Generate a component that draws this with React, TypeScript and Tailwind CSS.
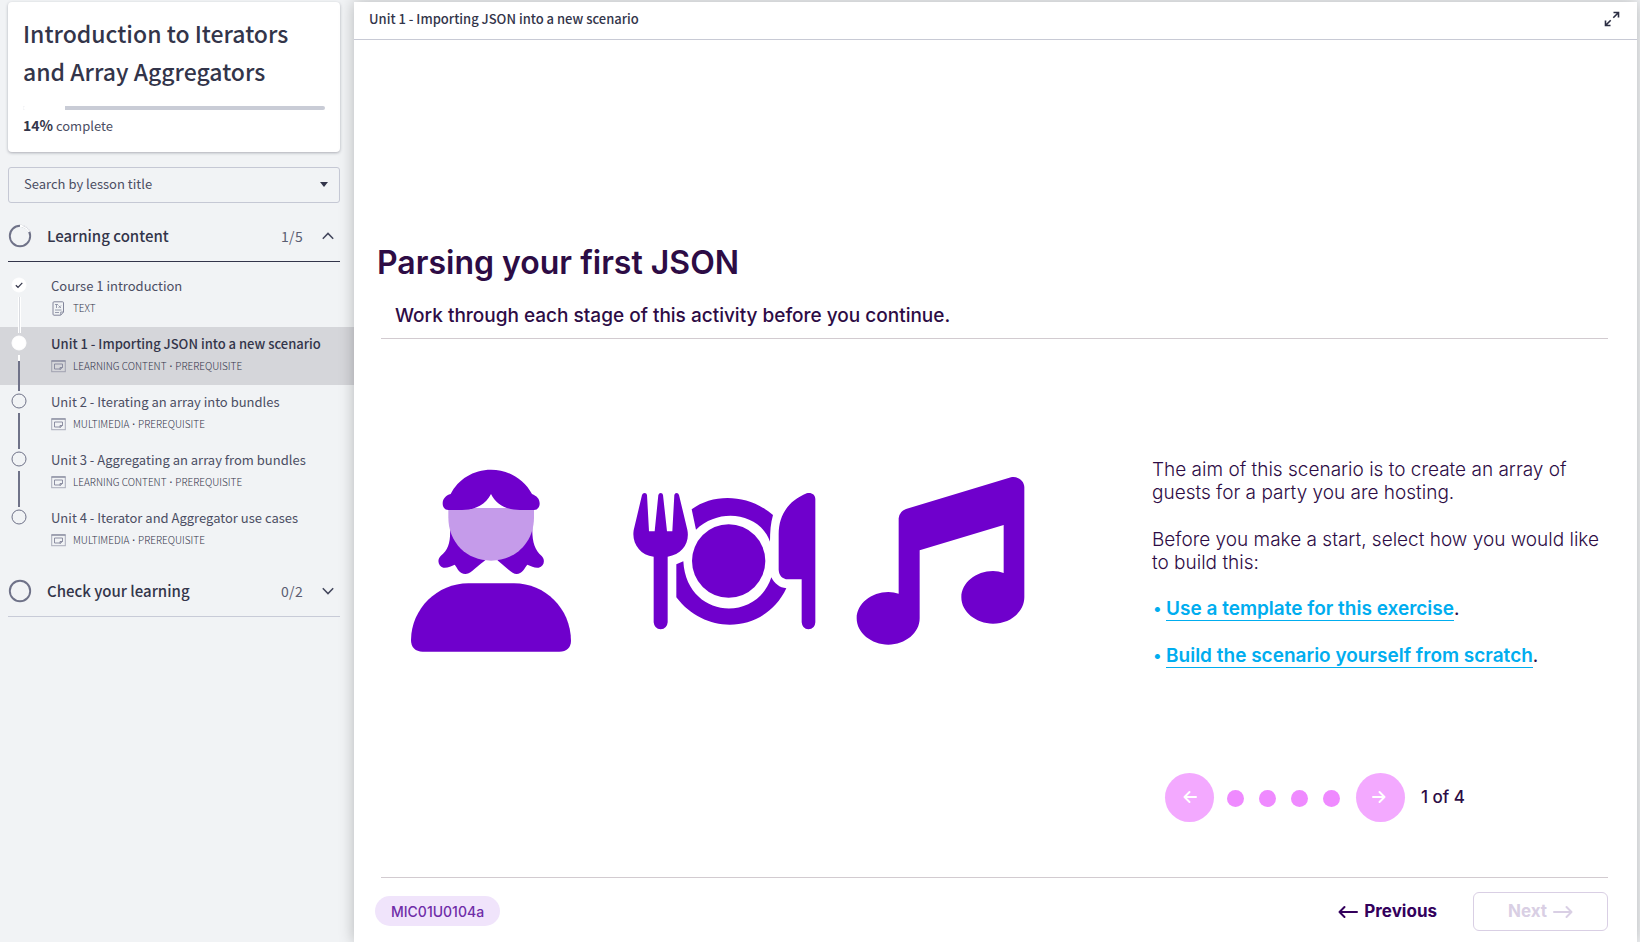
type LessonState = "done" | "active" | "todo";

interface Lesson {
  title: string;
  kind: string[];
  icon: "text" | "media";
  state: LessonState;
}

const lessons: Lesson[] = [
  { title: "Course 1 introduction", kind: ["TEXT"], icon: "text", state: "done" },
  { title: "Unit 1 - Importing JSON into a new scenario", kind: ["LEARNING CONTENT", "PREREQUISITE"], icon: "media", state: "active" },
  { title: "Unit 2 - Iterating an array into bundles", kind: ["MULTIMEDIA", "PREREQUISITE"], icon: "media", state: "todo" },
  { title: "Unit 3 - Aggregating an array from bundles", kind: ["LEARNING CONTENT", "PREREQUISITE"], icon: "media", state: "todo" },
  { title: "Unit 4 - Iterator and Aggregator use cases", kind: ["MULTIMEDIA", "PREREQUISITE"], icon: "media", state: "todo" },
];

function TextIcon() {
  return (
    <svg width="15" height="15" viewBox="0 0 15 15" fill="none" stroke="#82859a" aria-hidden="true">
      <path d="M3 .8h8.5a1 1 0 0 1 1 1V11L9.700 14.200H3a1 1 0 0 1-1-1V1.800a1 1 0 0 1 1-1Z" />
      <path d="M12.500 11H9.700v3M4 3.500h3M5.500 3.500v3.500M7.500 4.500l2.500 2.500M10 4.500 7.500 7M4 9h6.500M4 11.500h4" strokeWidth=".8" />
    </svg>
  );
}

function MediaIcon() {
  return (
    <svg width="15" height="13" viewBox="0 0 15 13" fill="none" stroke="#82859a" aria-hidden="true">
      <rect x=".7" y=".9" width="13.600" height="10.800" strokeOpacity=".65" />
      <path d="M.5 1h14" strokeWidth="1.200" />
      <path d="M9.500 9H3.500V4h8v3.500M9 9.500V7.500h2.500Z" strokeWidth=".9" />
    </svg>
  );
}

function LessonMarker({ state, last }: { state: LessonState; last: boolean }) {
  return (
    <div className="flex w-4 flex-none flex-col items-center gap-1 pt-2">
      <svg className="flex-none" width="16" height="16" viewBox="0 0 16 16" aria-hidden="true">
        <circle
          cx="8"
          cy="8"
          r="7"
          fill={state === "todo" ? "none" : "#fff"}
          stroke={state === "todo" ? "#6f7288" : "#fff"}
        />
        {state === "done" && <path d="M4.800 8.300 7 10.300l4.300-4.500" fill="none" stroke="#33354a" strokeWidth="1.200" />}
      </svg>
      {!last && state === "done" && <span className="h-9 w-[3px] flex-none border-x border-white bg-[#d9dbe0]" />}
      {!last && state === "active" && (
        <span className="flex h-9 w-[2px] flex-none flex-col bg-[#6f7288]">
          <span className="h-[6px] bg-white" />
        </span>
      )}
      {!last && state === "todo" && <span className="h-9 w-[2px] flex-none bg-[#6f7288]" />}
    </div>
  );
}

function Chevron({ up }: { up: boolean }) {
  return (
    <svg width="12" height="8" viewBox="0 0 12 8" fill="none" stroke="#43465c" strokeWidth="1.500" aria-hidden="true">
      <path d={up ? "M.8 6.800 6 1.400l5.200 5.400" : "M.8 1.200 6 6.600l5.200-5.400"} />
    </svg>
  );
}

function SectionHeader({ title, count, open }: { title: string; count: string; open: boolean }) {
  return (
    <button
      type="button"
      aria-expanded={open}
      className={
        "mx-2 flex h-[51px] items-center border-b text-left text-[#33354a] " +
        (open ? "border-[#33354a]" : "border-[#c8cbd7]")
      }
    >
      <svg width="24" height="24" viewBox="0 0 24 24" fill="none" strokeWidth="1.900" aria-hidden="true">
        <circle cx="12" cy="12" r="10.200" stroke="#6f7288" />
        {open && <path d="M12 1.800A10.200 10.200 0 0 1 21.200 7.600" stroke="#f1f3f5" strokeWidth="2.800" />}
        {open && <path d="M12 1.800A10.200 10.200 0 0 1 21.200 7.600" stroke="#fff" />}
        {open && <path d="M14.500 1.500A10.800 10.800 0 0 1 21.800 7.500" stroke="#c3c6d0" strokeWidth=".6" />}
      </svg>
      <span className="ml-[15px] flex-1 text-[15px] font-medium">{title}</span>
      <span className="mr-[19px] text-[14px] tracking-wide text-[#5a5d72]">{count}</span>
      <span className="mr-[6px]">
        <Chevron up={open} />
      </span>
    </button>
  );
}

function Sidebar() {
  return (
    <aside className="flex w-[354px] flex-none flex-col pt-[2px] font-['Noto_Sans_CJK_SC','Open_Sans',sans-serif]">
      <div className="mr-[14px] ml-2 rounded bg-white px-[15px] pt-3 pb-4 shadow-[0_1px_3px_rgba(40,44,60,0.35)]">
        <h1 className="text-[23px] leading-[38px] font-medium text-[#33354a]">
          Introduction to Iterators
          <br />
          and Array Aggregators
        </h1>
        <div
          role="progressbar"
          aria-label="Course progress"
          aria-valuenow={14}
          aria-valuemin={0}
          aria-valuemax={100}
          className="mt-4 flex h-1 overflow-hidden rounded-full bg-[#c9ccd6]"
        >
          <div className="w-[14%] bg-white" />
        </div>
        <p className="mt-[5px] text-[13px] leading-5 text-[#4b4e63]">
          <span className="text-[14px] font-bold text-[#33354a]">14%</span> complete
        </p>
      </div>

      <div className="relative mt-[15px] mr-[14px] ml-2">
        <select
          aria-label="Search by lesson title"
          className="h-9 w-full appearance-none rounded-[3px] border border-[#c5c8d4] bg-transparent px-[15px] pb-[2px] text-[13px] text-[#4b4e63]"
        >
          <option>Search by lesson title</option>
        </select>
        <svg className="pointer-events-none absolute top-[15px] right-3" width="8" height="5" viewBox="0 0 8 5" aria-hidden="true">
          <path d="M0 0h8L4 5Z" fill="#33354a" />
        </svg>
      </div>

      <div className="mt-2 mr-[6px] flex flex-col">
        <SectionHeader title="Learning content" count="1/5" open />
      </div>
      <ol className="py-[7px]">
        {lessons.map((lesson, i) => (
          <li key={lesson.title} className={lesson.state === "active" ? "h-[58px] bg-[#d5d6da]" : "h-[58px]"}>
            <a href="#lesson" className="flex h-full gap-6 pl-[11px]">
              <LessonMarker state={lesson.state} last={i === lessons.length - 1} />
              <span className="flex flex-col pt-[7px]">
                <span
                  className={
                    "text-[13px] leading-5 " +
                    (lesson.state === "active" ? "font-medium text-[#33354a]" : "text-[#4b4e63]")
                  }
                >
                  {lesson.title}
                </span>
                <span className="mt-1 flex items-center text-[10px] leading-4 font-light text-[#33354a]">
                  <span className="mr-[7px]">{lesson.icon === "text" ? <TextIcon /> : <MediaIcon />}</span>
                  {lesson.kind[0]}
                  {lesson.kind[1] && <span className="mx-[3px] font-['Open_Sans',sans-serif] font-semibold">·</span>}
                  {lesson.kind[1]}
                </span>
              </span>
            </a>
          </li>
        ))}
      </ol>
      <div className="mr-[6px] flex flex-col">
        <SectionHeader title="Check your learning" count="0/2" open={false} />
      </div>
    </aside>
  );
}

function PersonArt() {
  return (
    <svg width="162" height="184" viewBox="60 55 486 552" fill="#6f00cc" aria-hidden="true">
      <path d="M180 230C182 275 176 296 152 316 140 328 145 347 160 351 172 353 184 346 194 342 202 352 208 370 226 370 240 370 250 356 284 330H324C356 356 366 370 380 370 396 370 404 352 412 342 424 346 434 353 446 351 462 347 467 328 455 316 434 296 426 275 427 230Z" />
      <path d="M284 329 303 326 324 329 303 372Z" fill="#fff" />
      <path d="M175 172H432V200C432 276 376 330 303 330S175 276 175 200Z" fill="#c59bea" />
      <path d="M182 130C204 86 250 57 303 57S402 86 426 130C440 136 449 144 449 158 449 170 443 178 432 178H390C348 178 318 160 303 130 288 160 258 178 216 178H175C164 178 158 170 158 158 158 144 168 134 182 130Z" />
      <path d="M235 398H372C466 398 542 474 543 570 543 590 530 603 508 603H98C76 603 63 590 63 568 64 474 142 398 235 398Z" />
    </svg>
  );
}

function DinnerArt() {
  return (
    <svg width="184" height="139" viewBox="730 125 552 417" fill="#6f00cc" aria-hidden="true">
      <path d="M757 134Q759 128 765 128 771 128 772 134L778 243H795L806 134Q808 128 813 128 819 128 820 134L832 243H848L854 134Q855 128 861 128 866 128 868 134L893 238C901 278 878 312 834 319V516Q832 536 813 537 794 536 792 516V319C750 314 726 278 732 240Z" />
      <path d="M906 177C974 127 1078 132 1150 194 1143 218 1141 244 1141 274 1112 190 992 168 919 238Z" />
      <circle cx="1017" cy="332" r="110" />
      <path d="M860 342 881 333C890 504 1100 520 1145 381 1154 400 1170 412 1190 414 1128 546 952 562 860 441Z" />
      <path d="M1251 129C1264 125 1277 132 1277 146V516Q1276 536 1256 537 1238 536 1236 516V387H1195C1178 386 1168 376 1167 358V252C1167 190 1200 150 1251 129Z" />
    </svg>
  );
}

function MusicArt() {
  return (
    <svg width="170" height="170" viewBox="406 78 510 510" fill="#6f00cc" aria-hidden="true">
      <path d="M871 82C892 78 911 92 911 112V442C911 486 868 521 817 521S722 486 722 442 766 363 817 363Q834 363 849 369V225L597 301V505C597 549 554 584 503 584S408 549 408 505 452 426 503 426Q520 426 534 431V205Q536 184 556 177Z" />
    </svg>
  );
}

function Arrow({ left, width = 20 }: { left?: boolean; width?: number }) {
  return (
    <svg width={width} height="14" viewBox={"0 0 " + width + " 14"} fill="none" stroke="currentColor" strokeWidth="2" strokeLinecap="round" strokeLinejoin="round" aria-hidden="true">
      {left ? (
        <path d={"M" + (width - 1) + " 7H1.500M6.500 2 1.500 7l5 5"} />
      ) : (
        <path d={"M1 7H" + (width - 1.5) + "M" + (width - 6.5) + " 2l5 5-5 5"} />
      )}
    </svg>
  );
}

function Pager() {
  return (
    <nav aria-label="Steps" className="ml-[13px] flex items-center text-white">
      <button type="button" aria-label="Previous step" className="flex size-[49px] items-center justify-center rounded-full bg-[#f3a9ff] pb-[2px]">
        <Arrow left width={14} />
      </button>
      <ul className="mr-4 ml-[13px] flex gap-[15px] pt-[2px]">
        {[1, 2, 3, 4].map((n) => (
          <li key={n} className="size-[17px] rounded-full bg-[#ef8aff]" />
        ))}
      </ul>
      <button type="button" aria-label="Next step" className="flex size-[49px] items-center justify-center rounded-full bg-[#f3a9ff] pr-1 pb-[2px]">
        <Arrow width={14} />
      </button>
      <span className="ml-4 text-[17px] font-medium text-[#2d0c45]">1 of 4</span>
    </nav>
  );
}

function ChoiceLink({ href, label }: { href: string; label: string }) {
  return (
    <li className="flex">
      <span className="w-[14px] text-[#00adef]">•</span>
      <a href={href} className="border-b border-[#00adef] font-semibold text-[#00adef]">
        {label}
      </a>
      <span className="font-normal">.</span>
    </li>
  );
}

export default function App() {
  return (
    <div className="flex min-h-screen overflow-hidden bg-[#f1f3f5]">
      <Sidebar />
      <main className="mt-[2px] mr-[3px] flex flex-1 flex-col bg-white font-['Inter','Liberation_Sans',sans-serif] shadow-[0_0_14px_rgba(0,0,0,0.25)]">
        <header className="flex h-[38px] items-center justify-between border-b border-[#c8cad5] pr-[17px] pb-[3px] pl-[15px] font-['Noto_Sans_CJK_SC','Open_Sans',sans-serif]">
          <h2 className="text-[13px] leading-5 font-medium text-[#33354a]">Unit 1 - Importing JSON into a new scenario</h2>
          <button type="button" aria-label="Full screen" className="text-[#2b2d42]">
            <svg width="16" height="16" viewBox="0 0 16 16" fill="none" stroke="currentColor" strokeWidth="1.600" aria-hidden="true">
              <path d="M9.500 1.500h5v5M14 2 9.300 6.700M6.500 14.500h-5v-5M2 14l4.700-4.700" />
            </svg>
          </button>
        </header>

        <article className="flex flex-1 flex-col pr-[29px] pl-[27px]">
          <h1 className="-ml-1 pt-[203px] text-[32px] leading-10 font-semibold text-[#2d0c45]">Parsing your first JSON</h1>
          <p className="mt-5 border-b border-[#d2cbd0] pb-[9px] pl-[14px] text-[19px] leading-[26px] font-medium text-[#2d0c45]">
            Work through each stage of this activity before you continue.
          </p>

          <div className="flex flex-1 justify-between border-b border-[#d2cbd0]">
            <div className="mt-[130px] ml-[29px] flex h-[184px] items-center">
              <PersonArt />
              <div className="ml-[61px]">
                <DinnerArt />
              </div>
              <div className="ml-[39px]">
                <MusicArt />
              </div>
            </div>

            <div className="mt-[119px] flex w-[456px] flex-col text-[19px] leading-[23px] font-light text-[#2d0c45]">
              <p>
                The aim of this scenario is to create an array of
                <br />
                guests for a party you are hosting.
              </p>
              <p className="mt-6">
                Before you make a start, select how you would like
                <br />
                to build this:
              </p>
              <ul className="mt-[23px] mb-[105px] flex flex-col gap-[23px]">
                <ChoiceLink href="#template" label="Use a template for this exercise" />
                <ChoiceLink href="#scratch" label="Build the scenario yourself from scratch" />
              </ul>
              <Pager />
            </div>
          </div>
        </article>

        <footer className="mr-[29px] ml-[21px] flex h-16 items-center justify-between pt-[2px]">
          <span className="rounded-full bg-[#f0e4fb] px-4 pt-[5px] pb-[3px] text-[14px] leading-[22px] font-medium text-[#6f2da8]">MIC01U0104a</span>
          <div className="flex items-center gap-9 text-[17px] font-bold">
            <button type="button" className="flex items-center gap-[6px] pt-[2px] text-[#33005c]">
              <Arrow left />
              Previous
            </button>
            <button type="button" disabled className="flex h-[39px] w-[135px] items-center justify-center gap-[6px] rounded-md border border-[#d9cfe4] pt-[2px] text-[#d9cfe4]">
              Next
              <Arrow />
            </button>
          </div>
        </footer>
      </main>
    </div>
  );
}
